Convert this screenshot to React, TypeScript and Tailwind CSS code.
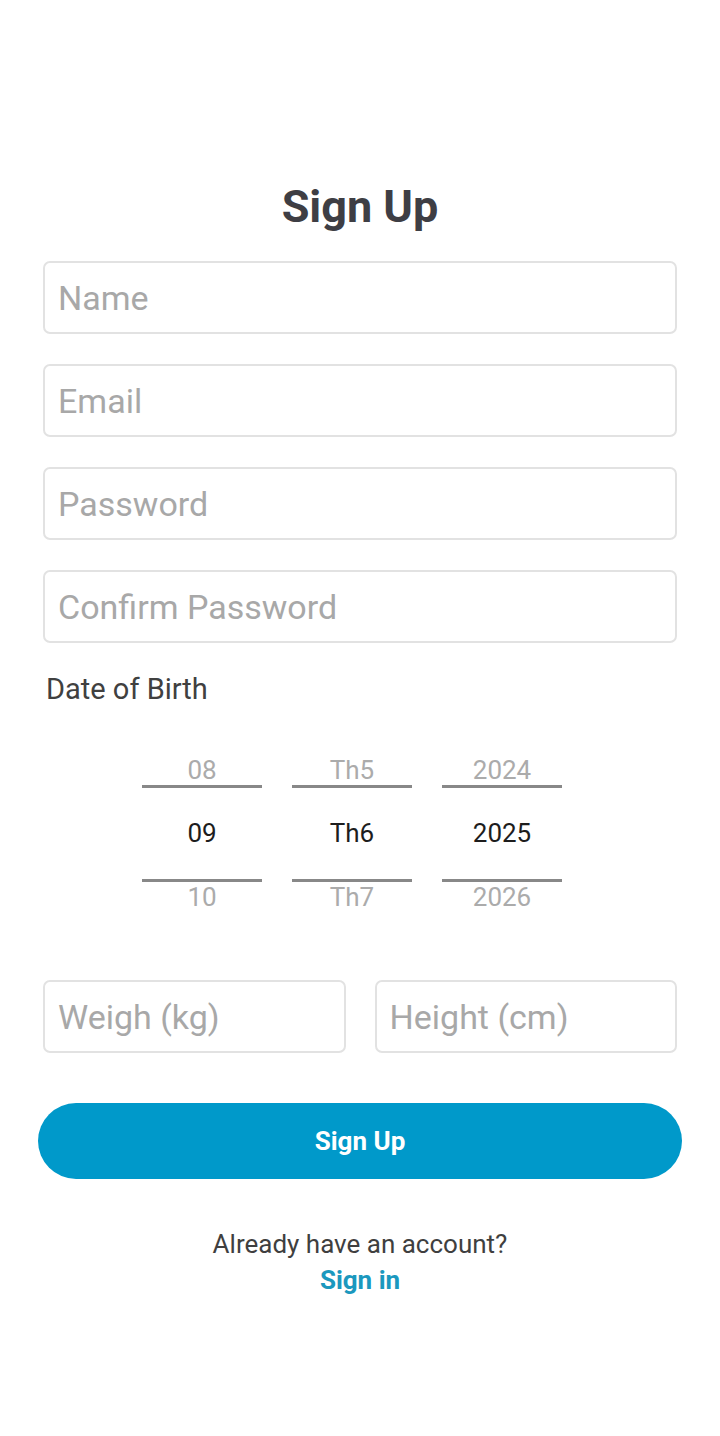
import { useState } from "react";

const inputCls =
  "w-full h-[73px] border-2 border-[#e2e2e2] rounded-[7px] px-[13px] text-[34px] text-[#333] placeholder-[#a8a8a8] outline-none bg-white";

function Wheel({ prev, value, next }: { prev: string; value: string; next: string }) {
  return (
    <div className="w-[120px] flex flex-col items-center">
      <div className="h-[30px] flex items-end text-[26px] leading-none text-[#ababab]">{prev}</div>
      <div className="w-full h-[3px] bg-[#888] mt-[2px]" />
      <div className="h-[91px] flex items-center text-[26px] text-[#1d1d1d]">{value}</div>
      <div className="w-full h-[3px] bg-[#888]" />
      <div className="h-[30px] flex items-start pt-[2px] text-[26px] leading-none text-[#ababab]">{next}</div>
    </div>
  );
}

export default function App() {
  const [form, setForm] = useState({
    name: "",
    email: "",
    password: "",
    confirm: "",
    weight: "",
    height: "",
  });

  const set = (k: keyof typeof form) => (e: React.ChangeEvent<HTMLInputElement>) =>
    setForm((f) => ({ ...f, [k]: e.target.value }));

  return (
    <div className="min-h-[1436px] bg-white font-['Roboto',sans-serif]">
      <div className="pt-[178px] px-[43px]">
        <h1 className="text-center text-[45px] font-bold text-[#3e3e44] leading-[58px]">Sign Up</h1>

        <div className="mt-[25px] flex flex-col gap-[30px]">
          <input className={inputCls} placeholder="Name" value={form.name} onChange={set("name")} />
          <input className={inputCls} placeholder="Email" value={form.email} onChange={set("email")} />
          <input
            className={inputCls}
            type="password"
            placeholder="Password"
            value={form.password}
            onChange={set("password")}
          />
          <input
            className={inputCls}
            type="password"
            placeholder="Confirm Password"
            value={form.confirm}
            onChange={set("confirm")}
          />
        </div>

        <p className="mt-[28px] ml-[3px] text-[29px] text-[#404040] leading-[36px]">Date of Birth</p>

        <div className="mt-[46px] pr-[16px] flex justify-center gap-[30px]">
          <Wheel prev="08" value="09" next="10" />
          <Wheel prev="Th5" value="Th6" next="Th7" />
          <Wheel prev="2024" value="2025" next="2026" />
        </div>

        <div className="mt-[68px] flex gap-[29px]">
          <input className={inputCls} placeholder="Weigh (kg)" value={form.weight} onChange={set("weight")} />
          <input className={inputCls} placeholder="Height (cm)" value={form.height} onChange={set("height")} />
        </div>

        <button className="mt-[50px] -mx-[5px] w-[calc(100%+10px)] h-[76px] rounded-full bg-[#0099ca] text-white text-[26px] font-bold">
          Sign Up
        </button>

        <div className="mt-[48px] flex flex-col items-center">
          <p className="text-[26px] text-[#3f3f3f] leading-[34px]">Already have an account?</p>
          <button className="mt-[2px] text-[26px] font-bold text-[#1b98be] leading-[34px]">Sign in</button>
        </div>
      </div>
    </div>
  );
}
